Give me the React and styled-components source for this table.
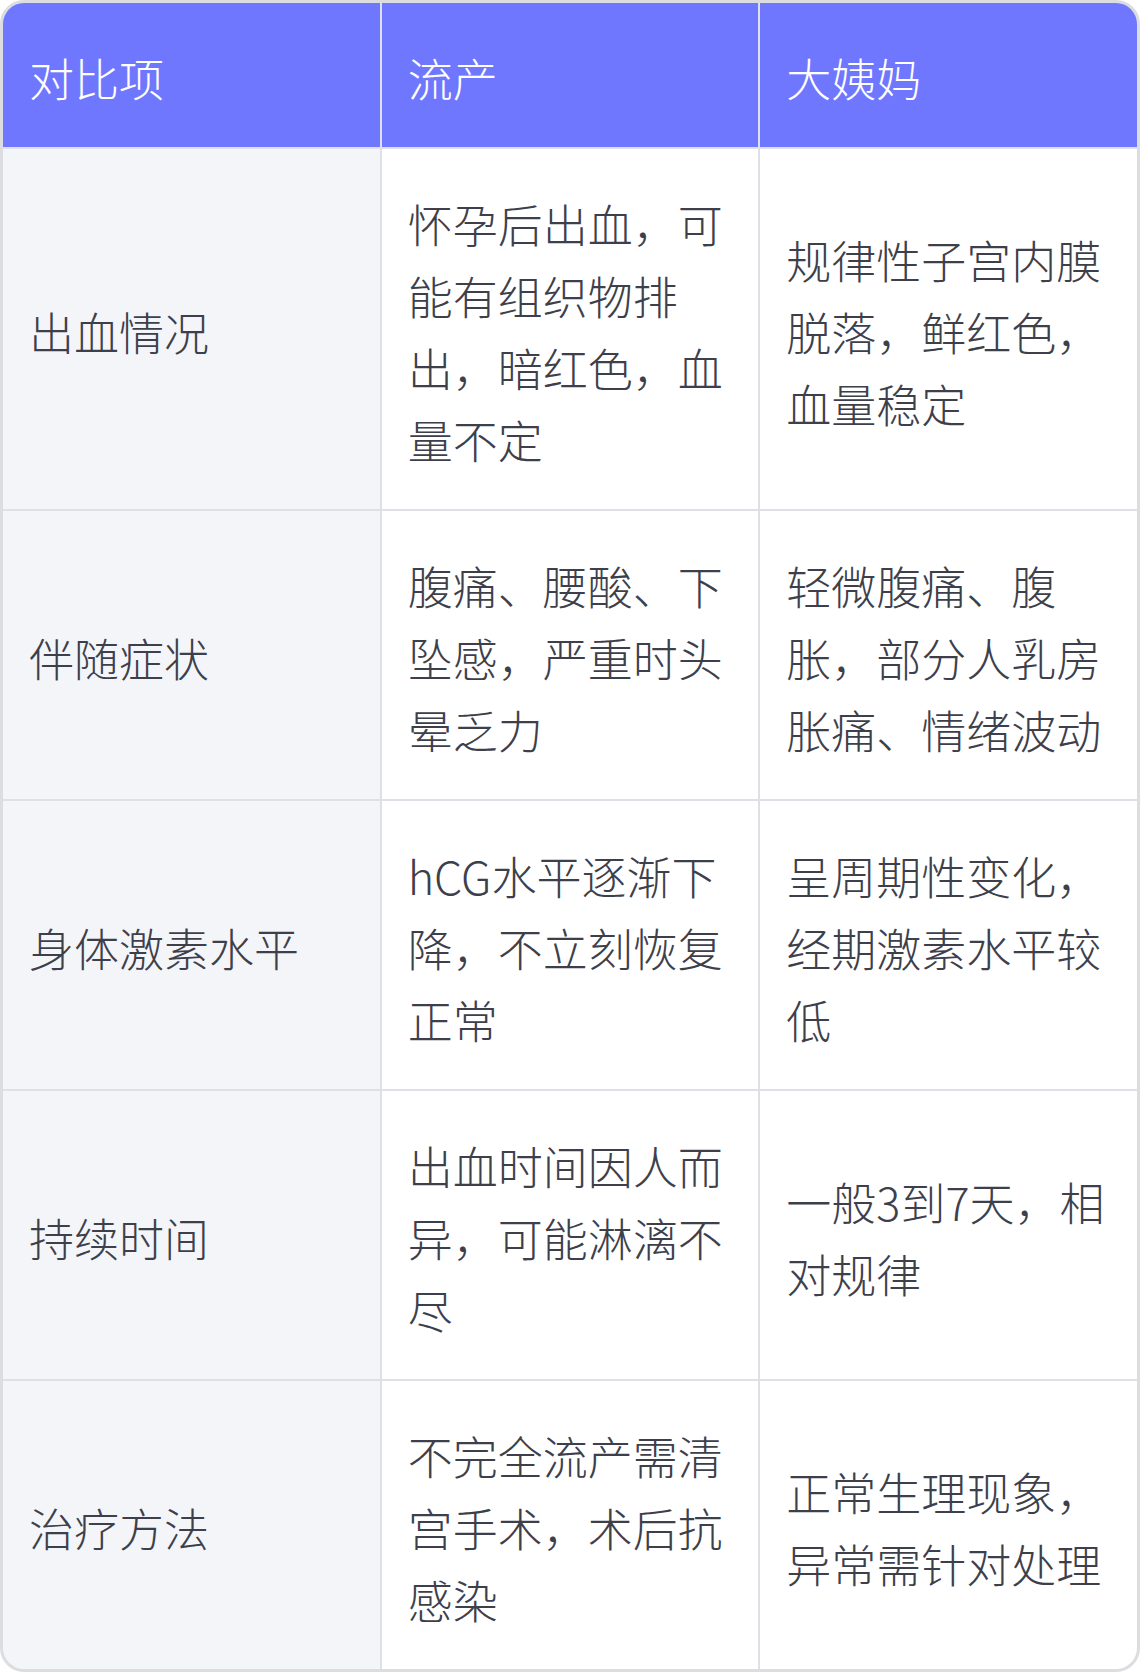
import React from "react";
import styled, { createGlobalStyle } from "styled-components";

const Global = createGlobalStyle`
  html, body { margin: 0; padding: 0; background: #ffffff; }
  body { font-family: "Noto Sans CJK SC", "Noto Sans", sans-serif; }
`;

const Table = styled.div`
  display: grid;
  grid-template-columns: repeat(3, 1fr);
  gap: 2px;
  background: #dfe0e5;
  border: 3px solid #dcdde1;
  border-radius: 24px;
  overflow: hidden;
  width: 1140px;
  box-sizing: border-box;
`;

const Cell = styled.div`
  display: flex;
  flex-direction: column;
  justify-content: center;
  padding: 39px 30px 33px 26px;
  font-size: 45px;
  line-height: 72px;
  font-weight: 300;
  color: ${(p) => (p.$head ? "#ffffff" : "#3d404b")};
  background: ${(p) => (p.$head ? "#7077ff" : p.$label ? "#f4f5f9" : "#ffffff")};
  word-break: break-all;
  line-break: strict;
`;

const head = ["对比项", "流产", "大姨妈"];
const rows = [
  ["出血情况", "怀孕后出血，可能有组织物排出，暗红色，血量不定", "规律性子宫内膜脱落，鲜红色，血量稳定"],
  ["伴随症状", "腹痛、腰酸、下坠感，严重时头晕乏力", "轻微腹痛、腹胀，部分人乳房胀痛、情绪波动"],
  ["身体激素水平", "hCG水平逐渐下降，不立刻恢复正常", "呈周期性变化，经期激素水平较低"],
  ["持续时间", "出血时间因人而异，可能淋漓不尽", "一般3到7天，相对规律"],
  ["治疗方法", "不完全流产需清宫手术，术后抗感染", "正常生理现象，异常需针对处理"],
];

export default function App() {
  return (
    <>
      <Global />
      <Table>
        {head.map((h) => (
          <Cell key={h} $head>{h}</Cell>
        ))}
        {rows.map((r) => (
          <React.Fragment key={r[0]}>
            <Cell $label>{r[0]}</Cell>
            <Cell>{r[1]}</Cell>
            <Cell>{r[2]}</Cell>
          </React.Fragment>
        ))}
      </Table>
    </>
  );
}
